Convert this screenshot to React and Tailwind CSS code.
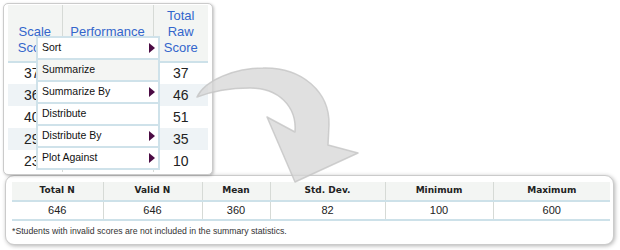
import React from 'react';

const scores = [
  { scale: 37, raw: 37 },
  { scale: 36, raw: 46 },
  { scale: 40, raw: 51 },
  { scale: 29, raw: 35 },
  { scale: 23, raw: 10 },
];

const menuItems = [
  { label: 'Sort', sub: true },
  { label: 'Summarize', sub: false, active: true },
  { label: 'Summarize By', sub: true },
  { label: 'Distribute', sub: false },
  { label: 'Distribute By', sub: true },
  { label: 'Plot Against', sub: true },
];

const stats = [
  { label: 'Total N', value: 646, w: 'w-[91px]' },
  { label: 'Valid N', value: 646, w: 'w-[99px]' },
  { label: 'Mean', value: 360, w: 'w-[68px]' },
  { label: 'Std. Dev.', value: 82, w: 'w-[115px]' },
  { label: 'Minimum', value: 100, w: 'w-[108px]' },
  { label: 'Maximum', value: 600, w: 'w-[117px]' },
];

function ContextMenu() {
  return (
    <div className="absolute left-[32px] top-[32px] w-[124px] border-2 border-[#cfe2ea] bg-[#cfe2ea] flex flex-col gap-[2px]">
      {menuItems.map((item) => (
        <div
          key={item.label}
          className={`h-[20px] flex items-center justify-between pl-[4px] pr-[3px] text-[10.5px] text-[#111] ${item.active ? 'bg-[#f4f5f3]' : 'bg-white'}`}
        >
          <span>{item.label}</span>
          {item.sub && (
            <span className="w-0 h-0 border-y-[5px] border-y-transparent border-l-[6px] border-l-[#4b0c44]" />
          )}
        </div>
      ))}
    </div>
  );
}

function CurvedArrow() {
  return (
    <svg className="absolute left-0 top-0 z-10 pointer-events-none" width="620" height="250">
      <path
        d="M197,97 C205,80 235,68 263,68 C302,67 330,92 329,125 L328,145 L358,153 L295,182 L267,117 L295,132 C297,106 278,88 250,88 C230,88 210,92 197,97 Z"
        fill="#d6d6d6"
        fillOpacity="0.75"
        stroke="#c4c4c4"
        strokeOpacity="0.8"
        strokeWidth="1.5"
        strokeLinejoin="round"
      />
    </svg>
  );
}

export default function App() {
  return (
    <div className="relative w-[620px] h-[250px] bg-white overflow-hidden font-['Liberation_Sans',Arial,sans-serif]">
      {/* score grid with popup menu */}
      <div className="relative ml-[3px] mt-[3px] w-[210px] border border-[#cbcbcb] rounded-[5px] shadow-[1px_1px_3px_rgba(0,0,0,0.25)] bg-white pl-[4px] pr-[4px] pt-[1px] pb-[2px]">
        <table className="w-[200px] border-collapse table-fixed">
          <thead>
            <tr className="bg-[#f3f5f3] h-[57px] border-b-2 border-[#cde1e9]">
              <th className="w-[54px] align-bottom pb-[5px] text-[13px] leading-[16px] font-normal text-[#3366cc] border-r border-[#d6dad6]">Scale Score</th>
              <th className="w-[91px] align-bottom pb-[5px] text-[13px] leading-[16px] font-normal text-[#3366cc] border-r border-[#d6dad6]">Performance Level</th>
              <th className="w-[55px] align-bottom pb-[5px] text-[13px] leading-[16px] font-normal text-[#3366cc]">Total Raw Score</th>
            </tr>
          </thead>
          <tbody>
            {scores.map((row, i) => (
              <tr key={i} className={`h-[22px] ${i % 2 === 1 ? 'bg-[#eef3f6]' : 'bg-white'}`}>
                <td className="text-center pr-[6px] text-[14px] text-[#222] border-r border-[#d6dad6]">{row.scale}</td>
                <td className="border-r border-[#d6dad6]"></td>
                <td className="text-center text-[14px] text-[#222]">{row.raw}</td>
              </tr>
            ))}
          </tbody>
        </table>
        <ContextMenu />
      </div>

      {/* summary statistics */}
      <div className="ml-[5px] mt-0 w-[609px] h-[70px] border border-[#cbcbcb] rounded-[9px] shadow-[1px_1px_4px_rgba(0,0,0,0.3)] bg-white pl-[6px] pt-[6px]">
        <table className="w-[598px] border-collapse table-fixed">
          <thead>
            <tr className="h-[19px] bg-[#f3f5f3] border-b-2 border-[#cde1e9]">
              {stats.map((s, i) => (
                <th
                  key={s.label}
                  className={`${s.w} text-center text-[9px] font-bold text-[#222] font-['DejaVu_Sans',Verdana,sans-serif] ${i < stats.length - 1 ? 'border-r border-[#d6dad6]' : ''}`}
                >
                  {s.label}
                </th>
              ))}
            </tr>
          </thead>
          <tbody>
            <tr className="h-[19px] border-b-2 border-[#cde1e9]">
              {stats.map((s, i) => (
                <td
                  key={s.label}
                  className={`text-center text-[11px] text-[#222] ${i < stats.length - 1 ? 'border-r border-[#d6dad6]' : ''}`}
                >
                  {s.value}
                </td>
              ))}
            </tr>
          </tbody>
        </table>
        <p className="mt-[4px] text-[8.7px] text-[#333] leading-[12px]">
          *Students with invalid scores are not included in the summary statistics.
        </p>
      </div>

      <CurvedArrow />
    </div>
  );
}
